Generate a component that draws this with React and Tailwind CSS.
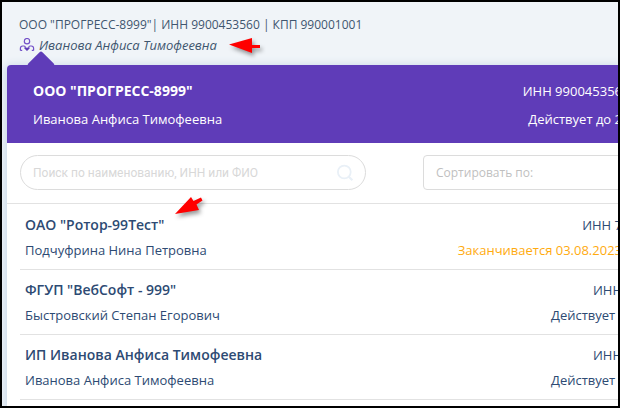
const rows = [
  { name: 'ОАО "Ротор-99Тест"', person: 'Подчуфрина Нина Петровна', inn: 'ИНН 7', term: 'Заканчивается 03.08.2023', ending: true },
  { name: 'ФГУП "ВебСофт - 999"', person: 'Быстровский Степан Егорович', inn: 'ИНН', term: 'Действует\u00a0\u00a0' },
  { name: 'ИП Иванова Анфиса Тимофеевна', person: 'Иванова Анфиса Тимофеевна', inn: 'ИНН', term: 'Действует\u00a0\u00a0' },
]

function UserIcon() {
  return (
    <svg width="16" height="14" viewBox="0 0 16 14" fill="none" stroke="#7350c8" strokeWidth="1.2" aria-hidden="true">
      <circle cx="8" cy="3.2" r="2.7" />
      <path d="M1.400 12.600v-2.300c0-1.400.9-2.300 2.300-2.300h1.300c.8 0 1.200.6 1.200 1.400M14.600 12.600v-2.300c0-1.400-.9-2.300-2.300-2.300H11c-.8 0-1.200.6-1.200 1.400" />
      <path d="M1.400 12.400h1.800M12.800 12.400h1.800" />
      <path d="M8 12.900L5.200 10.300c.2-1.100 2.100-1.500 2.800-.2.700-1.300 2.600-.9 2.800.2z" fill="#5f3cb8" stroke="none" />
    </svg>
  )
}

function SearchIcon() {
  return (
    <svg width="18" height="18" viewBox="0 0 18 18" fill="none" stroke="#e9f0f7" strokeWidth="1.8" aria-hidden="true">
      <circle cx="8.3" cy="8" r="6.4" />
      <path d="M12.800 12.700l3.600 3.500" strokeWidth="2.2" />
    </svg>
  )
}

export default function App() {
  return (
    <div className="flex min-h-screen flex-col overflow-hidden border-2 border-black bg-[#f0f4f8] font-['Open_Sans',sans-serif] text-[13px] leading-5 text-[#2d4a73]">
      <header className="px-[17px] pt-[13px] text-[#40566f]">
        <p className="text-[12px]">ООО "ПРОГРЕСС-8999"| ИНН 9900453560 | КПП 990001001</p>
        <div className="flex items-center gap-1 italic">
          <UserIcon />
          <span>Иванова Анфиса Тимофеевна</span>
          <svg className="ml-2 drop-shadow-[2px_3px_2px_rgba(0,0,0,0.4)]" width="34" height="18" viewBox="0 0 34 18" aria-hidden="true">
            <path d="M0 8.500L23 2v7h8v3H23V17z" fill="#f00" />
          </svg>
        </div>
      </header>

      <main className="relative mt-[10px] ml-[5px] flex-1 rounded-tl-[4px] bg-white shadow-[0_2px_8px_2px_#c9d8e8]">
        <div className="absolute -top-[10px] left-6 size-5 rotate-45 rounded-[2px] bg-[#5f3cb8]" />
        <section className="relative flex h-[78px] justify-between rounded-tl-[4px] bg-[#5f3cb8] pt-4 pl-[26px] text-white">
          <div className="space-y-2">
            <h1 className="text-[14px] leading-5 font-bold">ООО "ПРОГРЕСС-8999"</h1>
            <p>Иванова Анфиса Тимофеевна</p>
          </div>
          <div className="-mr-1 space-y-2 text-right">
            <p>ИНН 990045356</p>
            <p>Действует до 2</p>
          </div>
        </section>

        <form className="flex justify-between border-b border-[#e2e2e2] pt-3 pb-[13px] pl-[13px]">
          <label className="flex h-[35px] w-[346px] items-center rounded-full border border-[#dcdcdc] pr-[11px] pl-3">
            <input
              type="search"
              aria-label="Поиск"
              placeholder="Поиск по наименованию, ИНН или ФИО"
              className="min-w-0 flex-1 font-['Roboto',sans-serif] text-[12px] outline-none placeholder:text-[#d8d8d8]"
            />
            <SearchIcon />
          </label>
          <select
            aria-label="Сортировать по"
            className="-mr-2 h-[35px] w-[203px] appearance-none rounded-[4px] border border-[#dcdcdc] pl-3 text-[12px] text-[#bfbfbf]"
          >
            <option>Сортировать по:</option>
          </select>
        </form>

        <svg className="absolute top-[131px] left-[168px] drop-shadow-[2px_3px_2px_rgba(0,0,0,0.4)]" width="30" height="20" viewBox="0 0 30 20" aria-hidden="true">
          <path d="M0 18L16 1l2.500 4 7.500-3.500 1.500 3-6 4L24 14z" fill="#f00" />
        </svg>

        <ul className="pt-px pl-[13px]">
          {rows.map((row) => (
            <li key={row.name} className="flex justify-between border-b border-[#e2e2e2] pt-[10px] pb-[9px] pl-[5px]">
              <div className="space-y-[5px]">
                <h2 className="text-[14px] leading-5 font-semibold">{row.name}</h2>
                <p>{row.person}</p>
              </div>
              <div className="-mr-1 space-y-[5px] text-right">
                <p>{row.inn}</p>
                <p className={row.ending ? 'text-[#ffab0f]' : ''}>{row.term}</p>
              </div>
            </li>
          ))}
        </ul>
      </main>
    </div>
  )
}
